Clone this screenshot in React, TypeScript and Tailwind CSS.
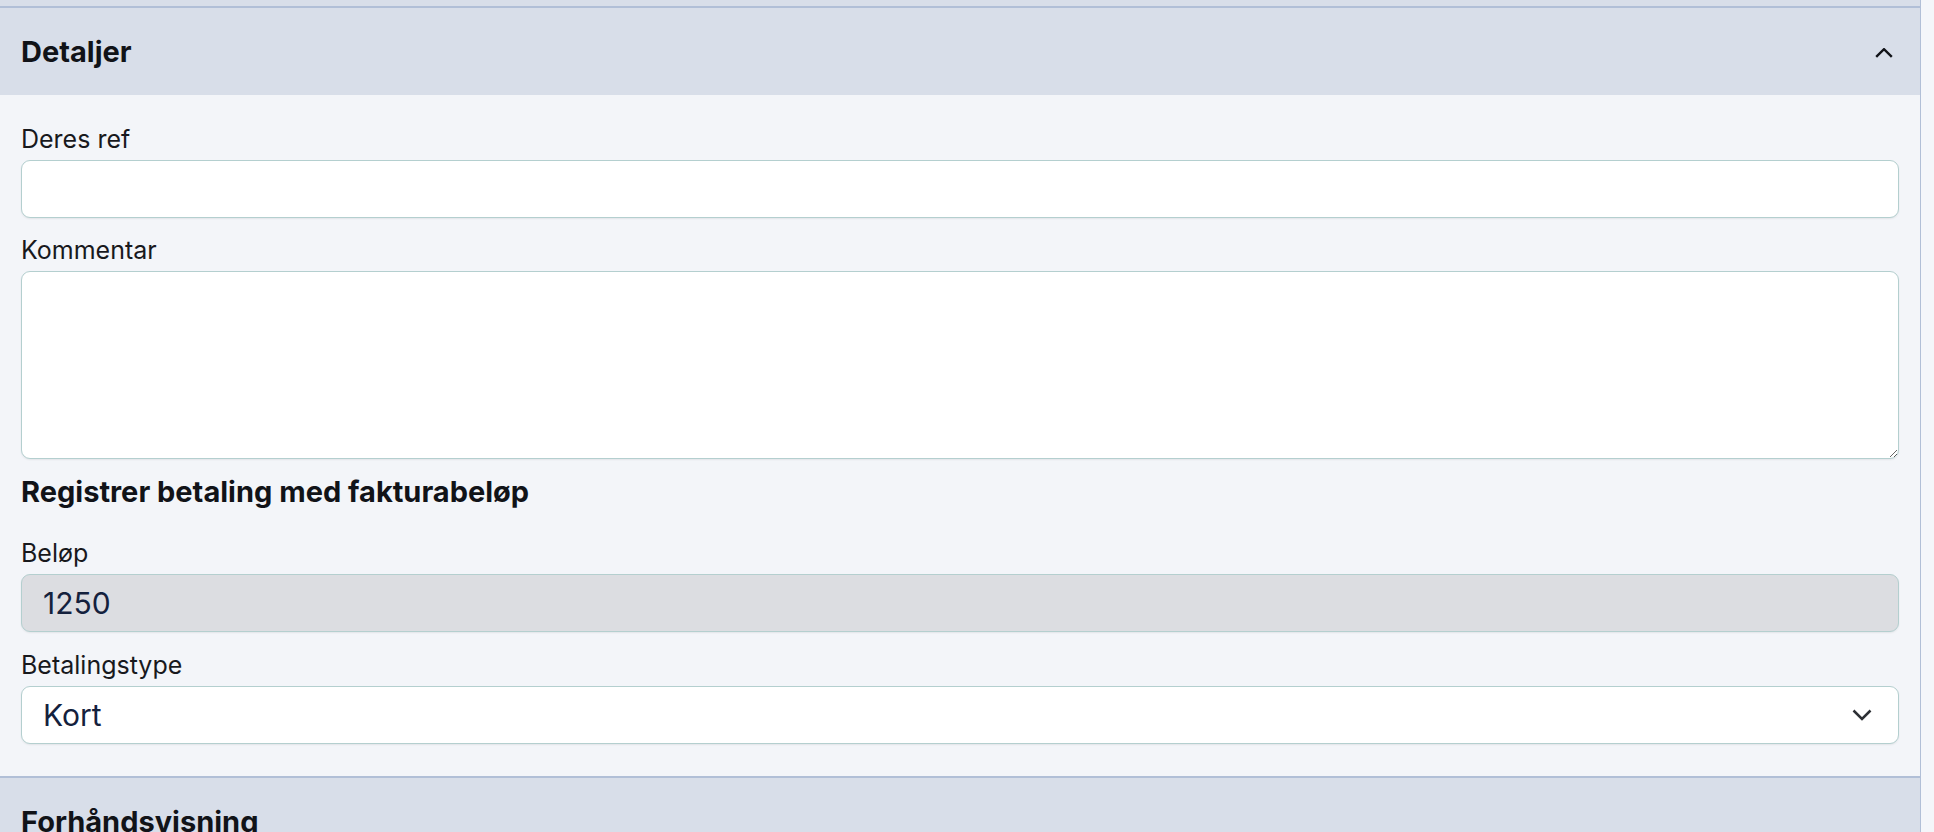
import React from "react";

function Label({ children, className = "" }: { children: React.ReactNode; className?: string }) {
  return (
    <label className={`block text-[25px] leading-[36px] text-[#18191d] ${className}`}>{children}</label>
  );
}

export default function App() {
  const inputBase =
    "block w-full rounded-[9px] border border-[#b4cfcf] shadow-[0_1px_2px_rgba(0,0,0,0.07)] outline-none";
  return (
    <div className="h-[832px] w-[1934px] overflow-hidden bg-[#f4f6fa] font-['Inter','Noto_Sans',sans-serif]">
      <div className="w-[1921px] border-r border-[#b1bfd7]">
        <div className="h-[6px] bg-[#d8dee9]" />
        <section className="border-t-2 border-[#b1bfd7]">
          <div className="flex h-[87px] items-center justify-between bg-[#d8dee9] pl-[21px] pr-[27px]">
            <h2 className="text-[29px] font-bold leading-[36px] text-[#111318]">Detaljer</h2>
            <svg width="18" height="10" viewBox="0 0 18 10" fill="none" className="mt-[2px]">
              <polyline points="1.2,8.8 9,1.2 16.8,8.8" stroke="#111318" strokeWidth="2.4" strokeLinejoin="miter" />
            </svg>
          </div>
          <div className="bg-[#f3f5f9] px-[21px] pb-[32px] pt-[26px]">
            <Label>Deres ref</Label>
            <input type="text" className={`${inputBase} mt-[3px] h-[58px] bg-white pl-[21px] pr-[20px] text-[30px]`} />

            <Label className="mt-[14px]">Kommentar</Label>
            <textarea className={`${inputBase} mt-[3px] h-[188px] resize-y bg-white px-[20px] py-[10px] text-[30px]`} />

            <h3 className="mt-[15px] text-[29px] font-bold leading-[36px] text-[#111318]">
              Registrer betaling med fakturabeløp
            </h3>

            <Label className="mt-[25px]">Beløp</Label>
            <input
              type="text"
              readOnly
              value="1250"
              className={`${inputBase} mt-[3px] h-[58px] bg-[#dcdde1] pl-[21px] pr-[20px] text-[30px] text-[#14213d]`}
            />

            <Label className="mt-[15px]">Betalingstype</Label>
            <div
              role="combobox"
              className={`${inputBase} mt-[3px] flex h-[58px] items-center justify-between bg-white pl-[21px] pr-[26px] text-[30px] text-[#14213d]`}
            >
              <span>Kort</span>
              <svg width="20" height="12" viewBox="0 0 20 12" fill="none">
                <polyline points="1.5,1.5 10,10 18.5,1.5" stroke="#2d3035" strokeWidth="2.5" />
              </svg>
            </div>
          </div>
        </section>
        <section className="border-t-2 border-[#b1bfd7]">
          <div className="flex h-[87px] items-center bg-[#d8dee9] pl-[21px] pr-[27px]">
            <h2 className="text-[29px] font-bold leading-[36px] text-[#111318]">Forhåndsvisning</h2>
          </div>
        </section>
      </div>
    </div>
  );
}
